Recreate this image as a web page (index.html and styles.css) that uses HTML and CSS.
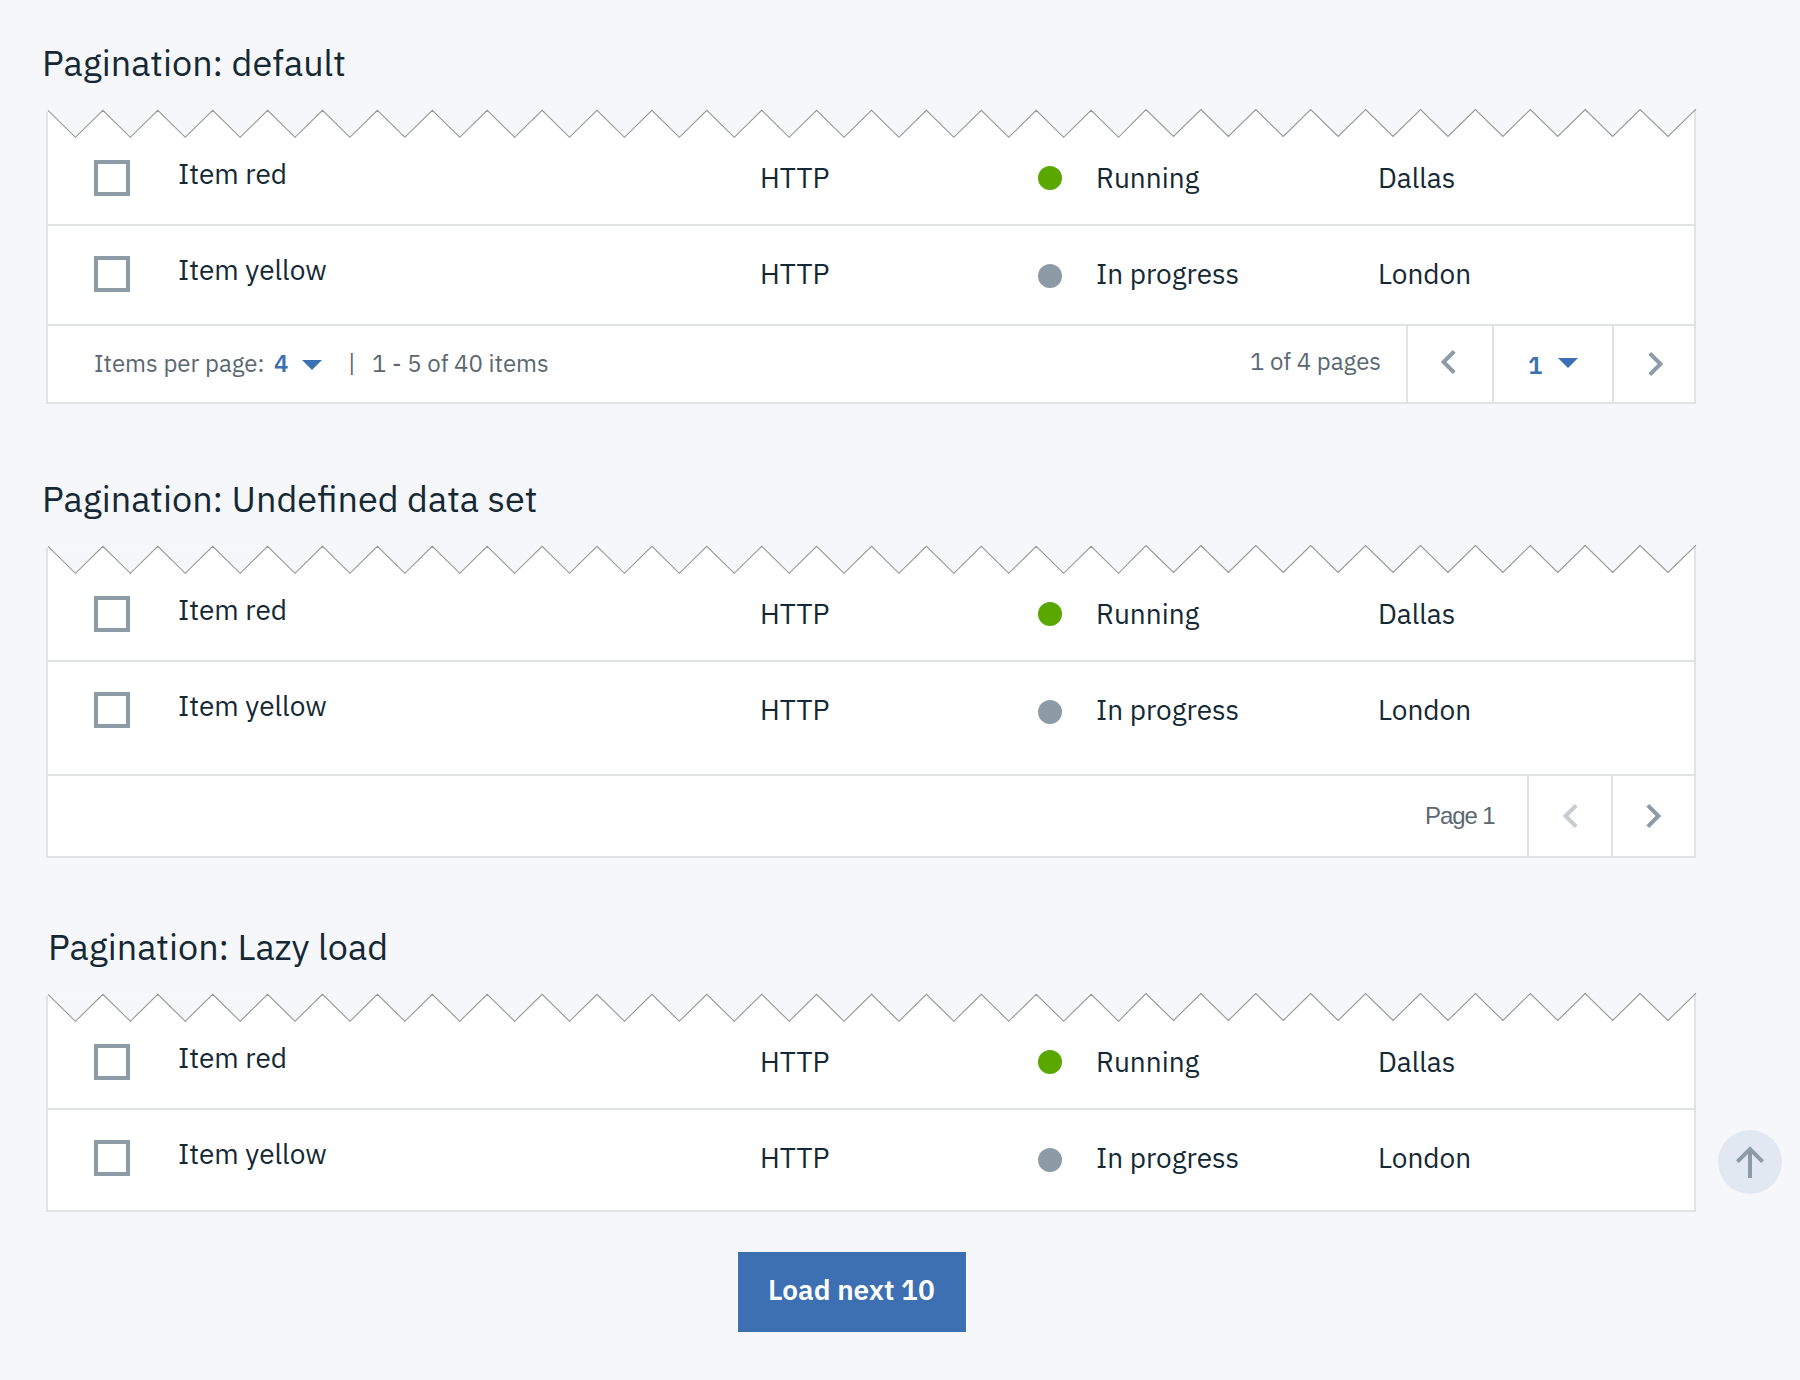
FILE: index.html
```
<!DOCTYPE html>
<html lang="en">
<head>
<meta charset="utf-8">
<title>Pagination</title>
<link rel="stylesheet" href="styles.css">
</head>
<body>
<svg class="defs" width="0" height="0" aria-hidden="true">
  <symbol id="tear" viewBox="0 0 1650 28" overflow="visible">
    <rect class="tear-corner" x="0" y="0" width="2" height="2"/>
    <path class="tear-line" d="M2 .3l27.45 27 27.45-27 27.45 27 27.45-27 27.45 27 27.45-27 27.45 27 27.45-27 27.45 27 27.45-27 27.45 27 27.45-27 27.45 27 27.45-27 27.45 27 27.45-27 27.45 27 27.45-27 27.45 27 27.45-27 27.45 27 27.45-27 27.45 27 27.45-27 27.45 27 27.45-27 27.45 27 27.45-27 27.45 27 27.45-27 27.45 27 27.45-27 27.45 27 27.45-27 27.45 27 27.45-27 27.45 27 27.45-27 27.45 27 27.45-27.8 27.45 27 27.45-27 27.45 27 27.45-27 27.45 27 27.45-27 27.45 27 27.45-27 27.45 27 27.45-27 27.45 27 27.45-27 27.45 27 27.45-27 27.45 27 27.45-27 27.45 27 27.45-27 27.9 27 28-27.4"/>
  </symbol>
  <symbol id="chevron" viewBox="0 0 15 24"><path d="M13.2 1.4 2.6 12l10.6 10.6" fill="none" stroke="currentColor" stroke-width="4"/></symbol>
  <symbol id="caret" viewBox="0 0 20 10"><path d="M0 0h20L10 10z" fill="currentColor"/></symbol>
</svg>
<main class="page">
  <section class="demo">
    <h2 class="title">Pagination: default</h2>
    <div class="card">
      <svg class="tear" width="1650" height="28"><use href="#tear"/></svg>
      <div class="row row-first">
        <span class="checkbox"></span><span class="name">Item red</span><span>HTTP</span>
        <span class="dot dot-running"></span><span>Running</span><span>Dallas</span>
      </div>
      <div class="row row-last">
        <span class="checkbox"></span><span class="name">Item yellow</span><span>HTTP</span>
        <span class="dot dot-progress"></span><span>In progress</span><span>London</span>
      </div>
      <div class="pager">
        <span class="per-page">Items per page:</span>
        <span class="size">4</span>
        <svg class="caret caret-size" width="20" height="10"><use href="#caret"/></svg>
        <span class="divider">|</span>
        <span>1 - 5 of 40 items</span>
        <span class="count">1 of 4 pages</span>
        <div class="cell cell-prev"><svg class="chevron" width="15" height="24"><use href="#chevron"/></svg></div>
        <div class="cell cell-page"><span class="current">1</span><svg class="caret" width="20" height="10"><use href="#caret"/></svg></div>
        <div class="cell cell-next"><svg class="chevron next" width="15" height="24"><use href="#chevron"/></svg></div>
      </div>
    </div>
  </section>

  <section class="demo">
    <h2 class="title">Pagination: Undefined data set</h2>
    <div class="card">
      <svg class="tear" width="1650" height="28"><use href="#tear"/></svg>
      <div class="row row-first">
        <span class="checkbox"></span><span class="name">Item red</span><span>HTTP</span>
        <span class="dot dot-running"></span><span>Running</span><span>Dallas</span>
      </div>
      <div class="row row-last row-tall">
        <span class="checkbox"></span><span class="name">Item yellow</span><span>HTTP</span>
        <span class="dot dot-progress"></span><span>In progress</span><span>London</span>
      </div>
      <div class="pager pager-simple">
        <span class="page-label">Page 1</span>
        <div class="cell simple-prev"><svg class="chevron disabled" width="15" height="24"><use href="#chevron"/></svg></div>
        <div class="cell simple-next"><svg class="chevron next" width="15" height="24"><use href="#chevron"/></svg></div>
      </div>
    </div>
  </section>

  <section class="demo">
    <h2 class="title title-lazy">Pagination: Lazy load</h2>
    <div class="lazy">
      <div class="card">
        <svg class="tear" width="1650" height="28"><use href="#tear"/></svg>
        <div class="row row-first">
          <span class="checkbox"></span><span class="name">Item red</span><span>HTTP</span>
          <span class="dot dot-running"></span><span>Running</span><span>Dallas</span>
        </div>
        <div class="row row-last row-end">
          <span class="checkbox"></span><span class="name">Item yellow</span><span>HTTP</span>
          <span class="dot dot-progress"></span><span>In progress</span><span>London</span>
        </div>
      </div>
      <div class="to-top">
        <svg width="28" height="32" viewBox="0 0 28 32"><path d="M14 32V2M1.4 15.6 14 3l12.6 12.6" fill="none" stroke="currentColor" stroke-width="4"/></svg>
      </div>
    </div>
    <button class="load">Load next 10</button>
  </section>
</main>
</body>
</html>
```
FILE: styles.css
```
* { box-sizing: border-box; }

body {
  margin: 0;
  background: #f5f7fb;
  color: #152934;
  font: 400 28px/36px "IBM Plex Sans", "Open Sans", "Noto Sans", sans-serif;
}

.defs { display: block; }

.page {
  width: 1800px;
  height: 1380px;
  padding: 38px 0 0 46px;
  overflow: hidden;
}

.demo { margin-bottom: 70px; }
.demo + .demo { margin-bottom: 64px; }

.title {
  margin: 0 0 22px -4px;
  font-size: 36px;
  font-weight: 400;
  line-height: 50px;
}
.title-lazy { margin-left: 2px; }

.card {
  width: 1650px;
  background: #fff;
  border: solid #dfe3e6;
  border-width: 0 2px 2px;
}

.tear {
  display: block;
  margin-left: -2px;
  overflow: visible;
}
.tear-corner { fill: #f5f7fb; }
.tear-line { fill: #f5f7fb; stroke: #979797; stroke-width: 1.1; }

.row {
  display: grid;
  grid-template-columns: 84px 582px 278px 58px 282px 1fr;
  align-items: start;
  padding-left: 46px;
  border-bottom: 2px solid #dfe3e6;
}
.row-first { height: 88px; padding-top: 22px; }
.row-last { height: 100px; padding-top: 30px; }
.row-tall { height: 114px; }
.row-end { border-bottom: 0; }

.checkbox {
  width: 36px;
  height: 36px;
  border: 4px solid #8c9ba5;
  background: #fff;
}

.name { margin-top: -4px; }

.dot {
  width: 24px;
  height: 24px;
  margin-top: 6px;
  border-radius: 50%;
}
.dot-running { background: #5aa700; }
.dot-progress { margin-top: 8px; background: #8c9ba5; }

.pager {
  display: flex;
  height: 76px;
  padding-left: 46px;
  color: #5a6872;
  font-size: 24px;
  line-height: 74px;
}
.per-page { width: 180px; }
.size { width: 29px; color: #3d70b2; font-weight: 600; }
.caret { color: #3d70b2; }
.caret-size { margin: 34px 0 0 -1px; }
.divider { width: 50px; padding-left: 26px; }
.count { width: 156px; margin-left: auto; line-height: 70px; }

.cell { display: flex; border-left: 2px solid #dfe3e6; }
.cell-prev { width: 86px; padding: 24px 0 0 33px; }
.cell-page { width: 120px; }
.cell-page .caret { margin-top: 32px; }
.cell-next { width: 82px; padding: 26px 0 0 34px; }
.current {
  width: 64px;
  padding-left: 34px;
  color: #3d70b2;
  font-weight: 600;
  line-height: 78px;
}

.chevron { color: #8c9ba5; }
.chevron.next { transform: scaleX(-1); }
.chevron.disabled { color: #c5cdd2; }

.pager-simple { height: 80px; }
.page-label {
  width: 102px;
  margin-left: auto;
  font: 400 24px/80px "Liberation Sans", Arial, sans-serif;
  letter-spacing: -1.1px;
}
.simple-prev { width: 84px; padding: 28px 0 0 34px; }
.simple-next { width: 83px; padding: 28px 0 0 33px; }

.lazy { display: flex; align-items: flex-end; gap: 22px; }
.to-top {
  display: flex;
  width: 64px;
  height: 64px;
  margin-bottom: 18px;
  padding: 16px 18px;
  border-radius: 50%;
  background: #e1e8f2;
  color: #8c9ba5;
}

.load {
  display: block;
  width: 228px;
  height: 80px;
  margin: 40px 0 0 692px;
  padding: 0 0 5px 30px;
  border: 0;
  background: #3d70b2;
  color: #fff;
  font: 600 28px/75px "IBM Plex Sans", "Open Sans", sans-serif;
  text-align: left;
}
```
